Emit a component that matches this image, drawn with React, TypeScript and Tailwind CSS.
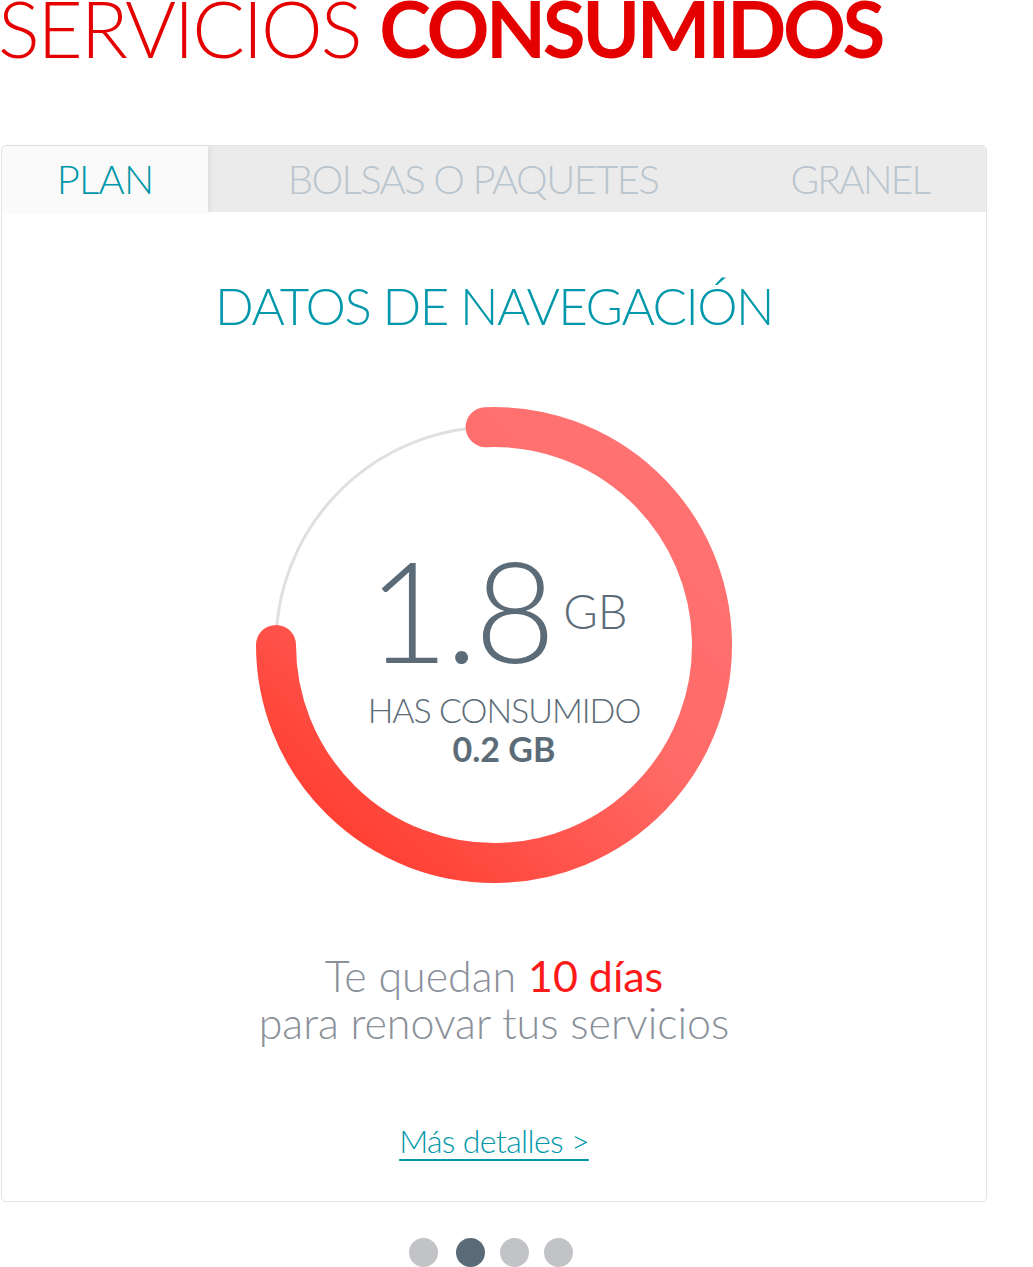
import React from "react";

const LATO = { fontFamily: '"Lato", "Liberation Sans", sans-serif' };

function Ring() {
  const cx = 240;
  const cy = 240;
  const r = 218;
  const a1 = (-2.2 * Math.PI) / 180;
  const sx = cx + r * Math.sin(a1);
  const sy = cy - r * Math.cos(a1);
  const ex = cx - r;
  const ey = cy;
  const d = `M ${sx} ${sy} A ${r} ${r} 0 1 1 ${ex} ${ey}`;
  return (
    <svg width="480" height="480" viewBox="0 0 480 480" className="absolute left-0 top-0">
      <defs>
        <linearGradient id="rg" x1="400" y1="40" x2="60" y2="440" gradientUnits="userSpaceOnUse">
          <stop offset="0" stopColor="#ff7373" />
          <stop offset="0.45" stopColor="#ff6a66" />
          <stop offset="1" stopColor="#ff3b2e" />
        </linearGradient>
      </defs>
      <circle cx={cx} cy={cy} r={r} fill="none" stroke="#e0e0e0" strokeWidth="3" />
      <path d={d} fill="none" stroke="url(#rg)" strokeWidth="40" strokeLinecap="round" />
    </svg>
  );
}

export default function App() {
  return (
    <div className="w-[1033px] h-[1267px] bg-white overflow-hidden relative" style={LATO}>
      <h1 className="text-[78px] leading-none text-[#e50000] whitespace-nowrap mt-[-11px] ml-[-2px]">
        <span className="font-light tracking-[-0.027em]">SERVICIOS </span>
        <span className="font-bold tracking-[-0.043em]">CONSUMIDOS</span>
      </h1>

      <div className="absolute left-[1px] top-[145px] w-[986px] h-[1057px] border border-[#e2e2e2] rounded-[5px] flex flex-col">
        <div className="flex h-[66px] bg-[#ebebeb] rounded-t-[5px] shrink-0">
          <div className="w-[206px] bg-[#fafafa] rounded-tl-[5px] flex items-center justify-center text-[40px] font-light text-[#0097a9] tracking-[-0.02em] shadow-[3px_0_4px_rgba(0,0,0,0.05)]">
            PLAN
          </div>
          <div className="w-[530px] flex items-center justify-center text-[40px] font-light text-[#b9c5cf] tracking-[-0.04em]">
            BOLSAS O PAQUETES
          </div>
          <div className="flex-1 flex items-center justify-center text-[39px] font-light text-[#b9c5cf] tracking-[-0.045em] pr-[4px]">
            GRANEL
          </div>
        </div>

        <div className="flex flex-col items-center">
          <div className="mt-[68px] text-[51px] leading-none font-light text-[#0098aa] tracking-[-0.03em] whitespace-nowrap">
            DATOS DE NAVEGACIÓN
          </div>

          <div className="relative w-[480px] h-[480px] mt-[74px]">
            <Ring />
            <div className="absolute inset-0 flex flex-col items-center pl-[20px]">
              <div className="flex items-start mt-[134px] ml-[-13px]">
                <span className="text-[140px] leading-none font-light text-[#5b6b78] tracking-[-0.025em]">1.8</span>
                <span className="text-[47px] leading-none font-light text-[#5b6b78] ml-[11px] mt-[49px]">GB</span>
              </div>
              <div className="mt-[14px] text-[34px] leading-none font-light text-[#5b6b78] tracking-[-0.03em] whitespace-nowrap">
                HAS CONSUMIDO
              </div>
              <div className="mt-[5px] text-[34px] leading-none font-bold text-[#5b6b78]">0.2 GB</div>
            </div>
          </div>

          <div className="mt-[67px] text-[43px] leading-[47px] font-light text-[#8a9099] text-center">
            <div>
              Te quedan <span className="text-[#ff1a1a] font-normal">10 días</span>
            </div>
            <div>para renovar tus servicios</div>
          </div>

          <a className="mt-[79px] text-[32px] leading-none font-light text-[#0098aa] underline underline-offset-[6px] decoration-[2px] tracking-[-0.02em] whitespace-nowrap">
            Más detalles &gt;
          </a>
        </div>
      </div>

      <div className="absolute left-0 right-0 top-[1238px] flex justify-center">
        <div className="flex gap-[15px] ml-[-52px]">
          <div className="w-[29px] h-[29px] rounded-full bg-[#c1c3c6]" />
          <div className="w-[29px] h-[29px] rounded-full bg-[#5a6a76] ml-[3px]" />
          <div className="w-[29px] h-[29px] rounded-full bg-[#c1c3c6]" />
          <div className="w-[29px] h-[29px] rounded-full bg-[#c1c3c6]" />
        </div>
      </div>
    </div>
  );
}
